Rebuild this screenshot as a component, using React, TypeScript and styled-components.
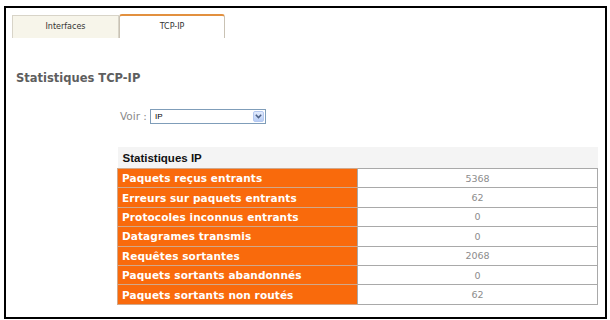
import styled, { createGlobalStyle } from "styled-components";

const GlobalStyle = createGlobalStyle`
	html, body {
		margin: 0;
		padding: 0;
		background: #ffffff;
	}
	body {
		font-family: "DejaVu Sans", Verdana, sans-serif;
	}
`;

const Frame = styled.div`
	box-sizing: border-box;
	margin: 6px 0 0 4px;
	width: 603px;
	height: 313px;
	border: 2px solid #000;
	background: #fff;
`;

const TabBar = styled.div`
	display: flex;
	align-items: flex-end;
	padding-left: 6px;
	height: 30px;
`;

const Tab = styled.div<{ $active?: boolean }>`
	box-sizing: border-box;
	width: ${(p) => (p.$active ? "106px" : "107px")};
	height: ${(p) => (p.$active ? "24px" : "23px")};
	display: flex;
	align-items: center;
	justify-content: center;
	font-family: "DejaVu Sans", Verdana, sans-serif;
	font-size: 8px;
	color: #333;
	background: ${(p) => (p.$active ? "#ffffff" : "#f7f5ea")};
	border: 1px solid ${(p) => (p.$active ? "#c9c2b4" : "#d8d4c8")};
	border-top: ${(p) => (p.$active ? "2px solid #e2903f" : "1px solid #d8d4c8")};
	border-bottom: none;
	border-radius: ${(p) => (p.$active ? "3px 3px 0 0" : "0")};
	padding-bottom: 2px;
`;

const Title = styled.h1`
	margin: 32px 0 0 10px;
	font-family: "DejaVu Sans", Verdana, sans-serif;
	font-size: 11.5px;
	line-height: 16px;
	font-weight: bold;
	color: #5e5e5e;
`;

const FilterRow = styled.div`
	display: flex;
	align-items: center;
	gap: 3px;
	margin: 22px 0 0 114px;
	height: 16px;
`;

const FilterLabel = styled.span`
	font-family: "DejaVu Sans", Verdana, sans-serif;
	font-size: 10.5px;
	color: #8a8a8a;
`;

const Select = styled.div`
	box-sizing: border-box;
	width: 116px;
	height: 15px;
	border: 1px solid #7f9db9;
	display: flex;
	align-items: center;
	justify-content: space-between;
	padding: 0 1px 0 4px;
	font-family: "Liberation Sans", Arial, sans-serif;
	font-size: 8px;
	color: #000;
	background: #fff;
`;

const SelectButton = styled.div`
	box-sizing: border-box;
	width: 11px;
	height: 11px;
	border-radius: 2px;
	background: linear-gradient(#e2ebfd, #b8cdf5);
	border: 1px solid #b4c8f0;
	display: flex;
	align-items: center;
	justify-content: center;
`;

const StatsTable = styled.table`
	margin: 23px 0 0 111px;
	width: 480px;
	border-collapse: collapse;
	table-layout: fixed;
`;

const HeaderCell = styled.th`
	height: 21px;
	padding: 0 0 0 5px;
	text-align: left;
	background: #f4f4f4;
	font-family: "Liberation Sans", Arial, sans-serif;
	font-size: 11.5px;
	font-weight: bold;
	color: #111;
`;

const LabelCell = styled.td`
	height: 18.4px;
	padding: 0 0 0 4px;
	background: #f96a0c;
	border: 1px solid #d1a88a;
	border-right: none;
	font-family: "DejaVu Sans", Verdana, sans-serif;
	font-size: 10.5px;
	font-weight: bold;
	color: #fff;
	white-space: nowrap;
	letter-spacing: 0.1px;
`;

const ValueCell = styled.td`
	height: 18.4px;
	padding: 0;
	text-align: center;
	background: #fff;
	border: 1px solid #a9a9a9;
	font-family: "DejaVu Sans", Verdana, sans-serif;
	font-size: 9.5px;
	color: #8c8c8c;
`;

const stats = [
	{ label: "Paquets reçus entrants", value: "5368" },
	{ label: "Erreurs sur paquets entrants", value: "62" },
	{ label: "Protocoles inconnus entrants", value: "0" },
	{ label: "Datagrames transmis", value: "0" },
	{ label: "Requêtes sortantes", value: "2068" },
	{ label: "Paquets sortants abandonnés", value: "0" },
	{ label: "Paquets sortants non routés", value: "62" },
];

function App() {
	return (
		<>
			<GlobalStyle />
			<Frame>
				<TabBar>
					<Tab>Interfaces</Tab>
					<Tab $active>TCP-IP</Tab>
				</TabBar>

				<Title>Statistiques TCP-IP</Title>

				<FilterRow>
					<FilterLabel>Voir :</FilterLabel>
					<Select>
						<span>IP</span>
						<SelectButton>
							<svg width="7" height="5" viewBox="0 0 7 5">
								<path d="M0.8 0.8 L3.5 3.6 L6.2 0.8" fill="none" stroke="#4d6185" strokeWidth="1.5" />
							</svg>
						</SelectButton>
					</Select>
				</FilterRow>

				<StatsTable>
					<colgroup>
						<col style={{ width: "240px" }} />
						<col style={{ width: "240px" }} />
					</colgroup>
					<thead>
						<tr>
							<HeaderCell colSpan={2}>Statistiques IP</HeaderCell>
						</tr>
					</thead>
					<tbody>
						{stats.map((s) => (
							<tr key={s.label}>
								<LabelCell>{s.label}</LabelCell>
								<ValueCell>{s.value}</ValueCell>
							</tr>
						))}
					</tbody>
				</StatsTable>
			</Frame>
		</>
	);
}

export default App;
